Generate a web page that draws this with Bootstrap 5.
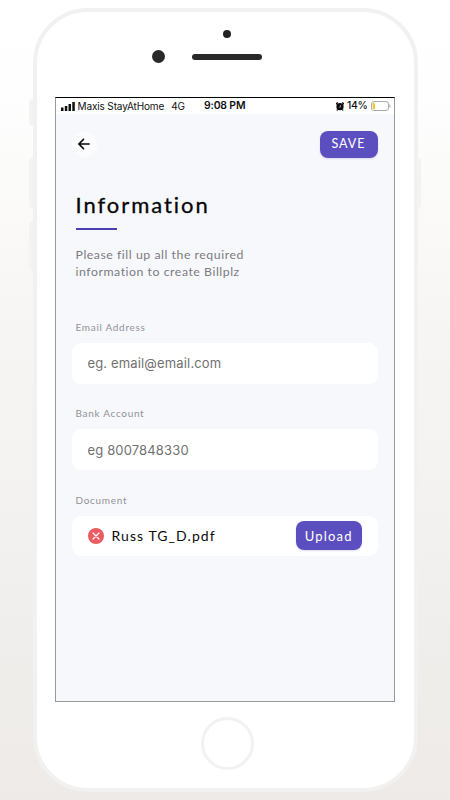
<!DOCTYPE html>
<html lang="en">
<head>
<meta charset="utf-8">
<meta name="viewport" content="width=device-width, initial-scale=1">
<title>Information</title>
<link href="https://cdn.jsdelivr.net/npm/bootstrap@5.3.0/dist/css/bootstrap.min.css" rel="stylesheet">
<style>
body{width:450px;height:800px;background:linear-gradient(#fff 0,#fefefe 90px,#f7f6f4 310px,#f2f1ef 530px,#edeae7 800px);font-family:Lato,"Liberation Sans",sans-serif;padding:8px 0 0 33px}
.phone{width:385px;height:784px;border:4px solid #f1f1f1;border-radius:55px;background:#fff}
.side-key{width:4px;background:#f3f3f2}
.key-l{left:-8px}.key-r{right:-7px}
.k1{top:87px;height:27px}.k2{top:146px;height:50px}.k3{top:209px;height:50px}
.face{height:85px}
.dot-a{width:8px;height:8px;background:#222;margin:18px auto 0;position:relative;left:1.5px}
.dot-b{width:13px;height:13px;background:#292929;margin-left:114.500px}
.speaker{width:70px;height:6px;background:#292929;margin-left:27.500px}
.screen{width:340px;height:605px;margin-left:17.500px;border:1px solid #999;border-top-color:#000;background:#f7f8fc}
.status{height:16px;background:#fff;font:500 10.4px/16px Inter,sans-serif;color:#111;padding:0 3px 0 5px;white-space:nowrap}
.st-net{width:143.500px}.st-time{font-weight:600;letter-spacing:-.15px}
.st-name{font-size:10px;font-weight:400;letter-spacing:-.13px}
.gap-a{margin-left:3px}.gap-b{margin-left:7px}
.pct{letter-spacing:-.3px}
.top-row{height:28px;margin-top:16px;padding:0 16px}
.back{width:25px;height:25px;background:#fcfcff}
.act{--bs-btn-color:#fff;--bs-btn-bg:#5b4fbf;--bs-btn-border-color:#5b4fbf;--bs-btn-hover-bg:#5144b1;--bs-btn-hover-color:#fff;padding:0;border:0;border-radius:8px;box-shadow:0 1px 2px #5b4fbf33}
.save{width:58px;height:27px;font-size:12.5px;line-height:24px;letter-spacing:1px}
.upload{width:65.500px;height:29px;font-size:13px;line-height:26px;letter-spacing:1.2px}
.content{padding:31px 16px 0}
.title{font-size:22px;line-height:32px;letter-spacing:1.95px;font-weight:400;color:#060606;margin:0 0 7px 4px;-webkit-text-stroke:.3px #060606}
.rule{width:41px;height:2px;background:#4c40b0;margin-left:4px}
.intro{font-size:12.3px;line-height:16.500px;letter-spacing:.53px;color:#7b7b80;margin:17px 0 0 4px}
.fields{padding-top:38.500px}
.lbl{font-size:10px;line-height:16px;letter-spacing:.69px;color:#929297;margin:0 0 8px 4px;display:block}
.field{height:41px;border:0;border-radius:9px;background:#fff;font:400 13px Inter,sans-serif;padding:0 16px;width:306px;letter-spacing:.15px}
.field::placeholder{color:#717171;opacity:1}
.field-group{margin-bottom:21.500px}
.file{width:306px;height:40px;border-radius:9px;background:#fff;padding:0 16px}
.fname{font-size:14px;letter-spacing:1.07px;color:#0b0b0b;margin-top:-1px}
.home{width:53px;height:53px;border:3px solid #f2f2f2;margin:15px 0 0 164px}
</style>
<script src="https://cdn.jsdelivr.net/npm/bootstrap@5.3.0/dist/js/bootstrap.bundle.min.js"></script>
</head>
<body class="overflow-hidden">
<div class="phone position-relative">
  <i class="side-key key-l k1 position-absolute rounded-start"></i>
  <i class="side-key key-l k2 position-absolute rounded-start"></i>
  <i class="side-key key-l k3 position-absolute rounded-start"></i>
  <i class="side-key key-r k2 position-absolute rounded-end"></i>
  <div class="face overflow-hidden">
    <div class="dot-a rounded-circle"></div>
    <div class="d-flex align-items-center mt-2 pt-1">
      <div class="dot-b rounded-circle"></div><div class="speaker rounded-pill"></div>
    </div>
  </div>
  <main class="screen">
    <div class="status d-flex align-items-center">
      <div class="st-net d-flex align-items-center">
        <svg width="14" height="9" fill="#111"><path d="M0 5.500h2.500V9H0zM3.800 4h2.500v5H3.800zM7.500 2h2.500v7H7.500zM11.300 0h2.500v9h-2.500z"/></svg>
        <span class="st-name gap-a">Maxis StayAtHome</span><span class="st-name gap-b">4G</span>
      </div>
      <span class="st-time">9:08 PM</span>
      <div class="d-flex align-items-center ms-auto">
        <svg width="8" height="9" viewBox="0 0 8 9"><circle cx="4" cy="4.700" r="3.600" fill="#080808"/><path d="M0 2.300 1.700.5M8 2.300 6.300.5M1.500 7.500 1 8.500M6.500 7.500 7 8.500" stroke="#080808" stroke-width="1.400"/><path d="M4.600 2.900v2.200H2.800" fill="none" stroke="#bbb" stroke-width=".7"/></svg>
        <span class="pct gap-a">14%</span>
        <svg class="gap-a" width="20" height="10" viewBox="0 0 20 10"><rect x=".5" y=".5" width="17" height="9" rx="2.500" fill="#fff" stroke="#aaa"/><rect x="1.700" y="2" width="2.300" height="6" rx=".6" fill="#fbc52d"/><path d="M18.700 3.500q1 1.500 0 3z" fill="#aaa" stroke="#aaa" stroke-width=".5"/></svg>
      </div>
    </div>
    <header class="top-row d-flex align-items-center justify-content-between">
      <a href="#" class="back rounded-circle d-flex align-items-center justify-content-center" aria-label="Back"><svg width="12" height="12" viewBox="0 0 12 12" fill="none" stroke="#080808" stroke-width="1.500"><path d="M11.700 6H1M6 .9.900 6 6 11.100"/></svg></a>
      <button class="btn act save">SAVE</button>
    </header>
    <div class="content">
      <h1 class="title">Information</h1>
      <div class="rule"></div>
      <p class="intro">Please fill up all the required<br>information to create Billplz</p>
      <form class="fields">
        <div class="field-group"><label class="lbl" for="email">Email Address</label>
        <input id="email" class="form-control field" placeholder="eg. email@email.com"></div>
        <div class="field-group"><label class="lbl" for="bank">Bank Account</label>
        <input id="bank" class="form-control field" placeholder="eg 8007848330"></div>
        <div><span class="lbl">Document</span>
        <div class="file d-flex align-items-center">
          <svg width="16" height="16" viewBox="0 0 16 16"><circle cx="8" cy="8" r="8" fill="#ec5b62"/><path d="m5 5 6 6m0-6-6 6" stroke="#fff" stroke-width="1.300" stroke-linecap="round"/></svg>
          <span class="fname ms-2">Russ TG_D.pdf</span>
          <button type="button" class="btn act upload ms-auto">Upload</button>
        </div></div>
      </form>
    </div>
  </main>
  <div class="home rounded-circle"></div>
</div>
</body>
</html>
